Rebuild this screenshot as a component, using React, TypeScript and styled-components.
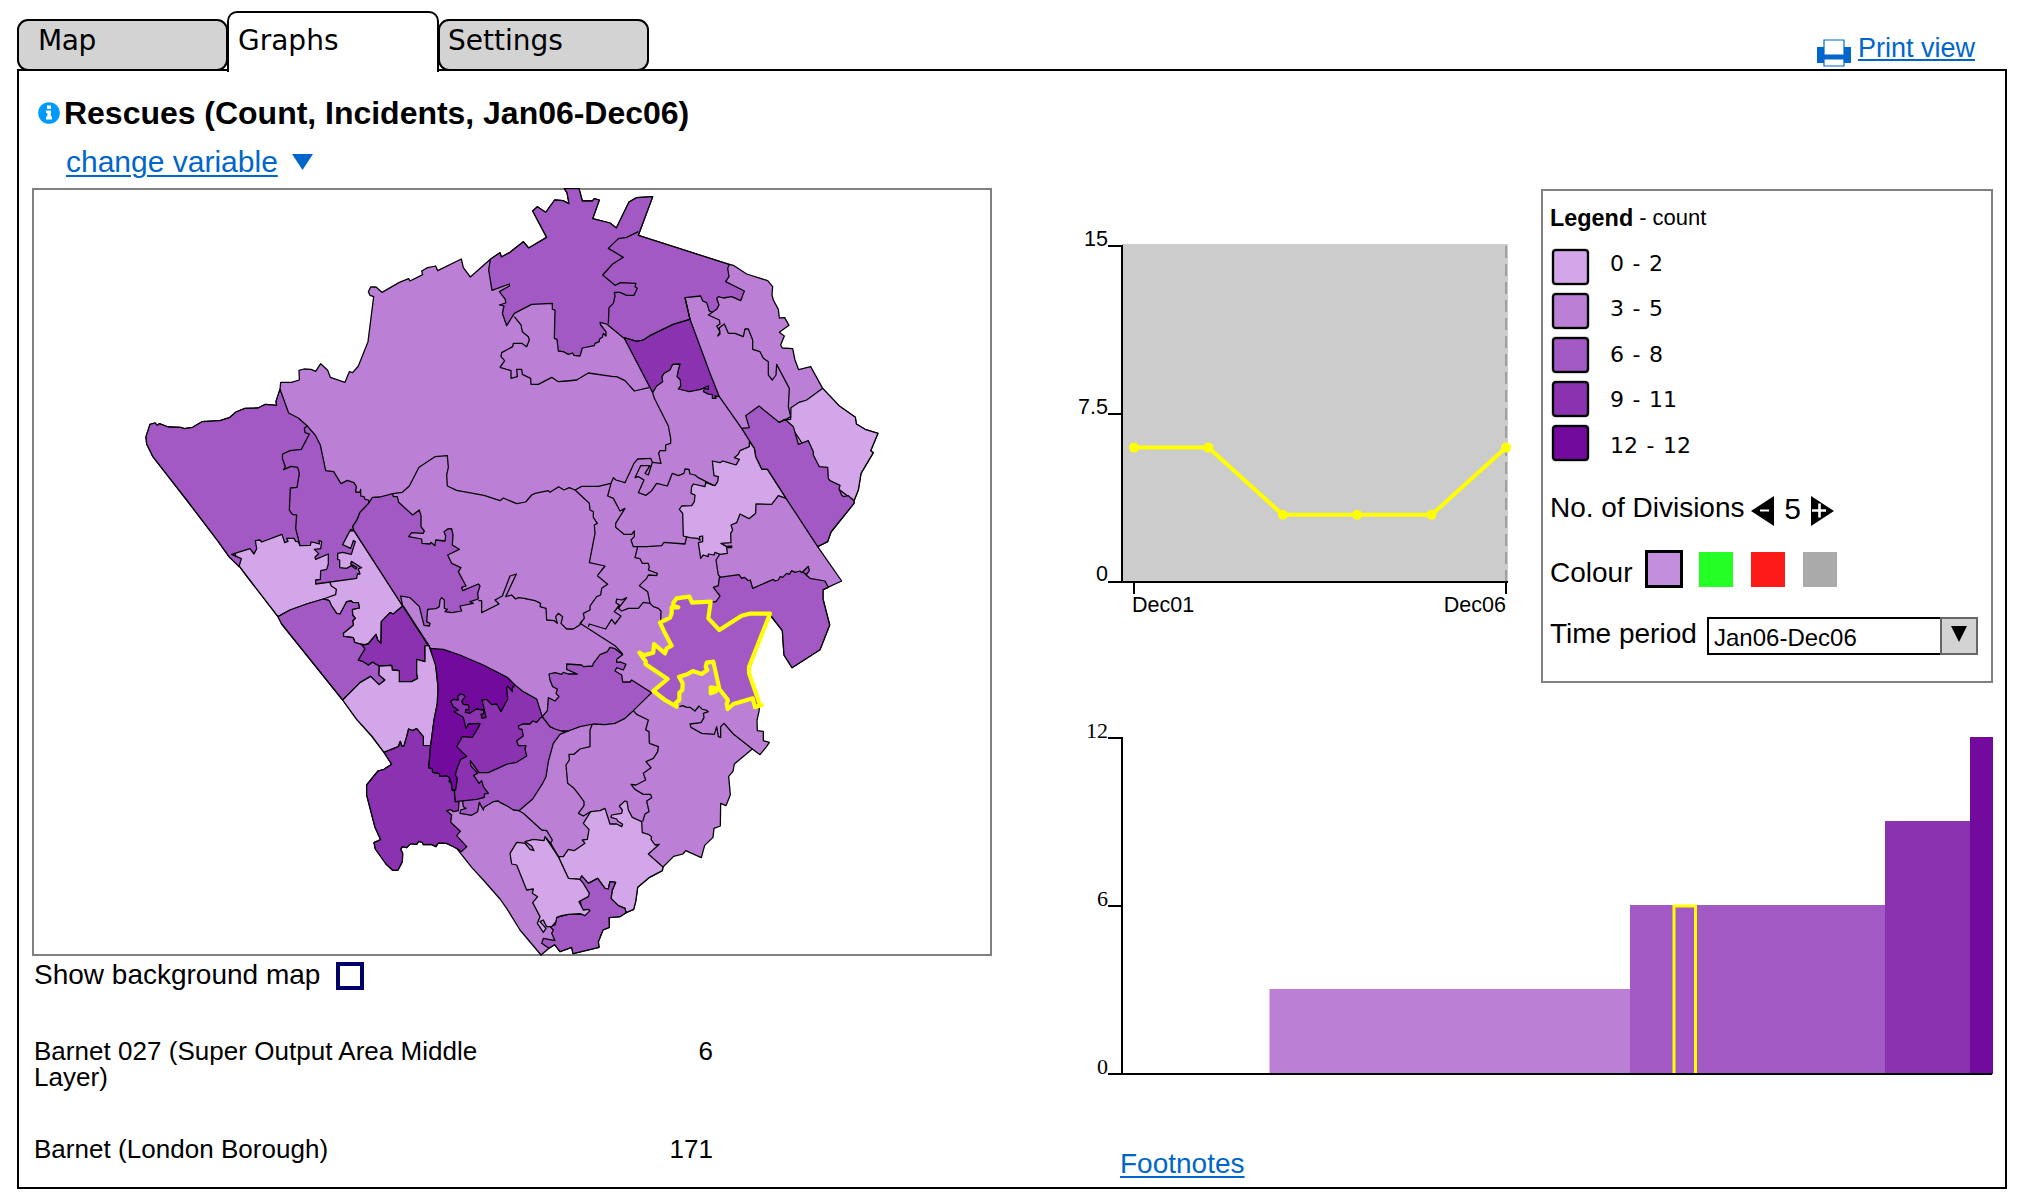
import React from "react";
import styled, { createGlobalStyle } from "styled-components";

const SANS = '"Liberation Sans", Arial, Helvetica, sans-serif';
const SERIF = '"Liberation Serif", "Times New Roman", serif';
const WIDE = '"DejaVu Sans", Verdana, sans-serif';
const LINK = "#0066cc";
const SHADES = ["#d3a6ea", "#bb80d6", "#a259c4", "#8a32b0", "#720b9d"];

const GlobalStyle = createGlobalStyle`
  *, *::before, *::after { box-sizing: border-box; }
  body { margin: 0; background: #fff; color: #000; font-family: ${SANS}; }
  svg { display: block; }
`;

const Page = styled.div`
  width: 2025px;
  height: 1202px;
  padding: 0 18px 13px 17px;
  display: flex;
  flex-direction: column;
  overflow: hidden;
`;

const Header = styled.header`
  height: 69px;
  flex: none;
  display: flex;
  justify-content: space-between;
  align-items: flex-end;
`;

const Tabs = styled.nav`
  display: flex;
  align-items: flex-end;
`;

const Tab = styled.button<{ $active?: boolean; $inset: number; $track: number }>`
  position: relative;
  z-index: ${(p) => (p.$active ? 2 : 0)};
  width: ${(p) => (p.$active ? 212 : 211)}px;
  height: ${(p) => (p.$active ? 61 : 52)}px;
  margin: 0 ${(p) => (p.$active ? "-1px" : "0")} ${(p) => (p.$active ? "-3px" : "-2px")}
    ${(p) => (p.$active ? "-1px" : "0")};
  padding: ${(p) => (p.$active ? 10 : 2)}px 0 0 ${(p) => p.$inset}px;
  border: 2px solid #000;
  border-bottom-width: ${(p) => (p.$active ? 0 : 2)}px;
  border-radius: ${(p) => (p.$active ? "10px 10px 0 0" : "11px")};
  background: ${(p) => (p.$active ? "#fff" : "#d3d3d3")};
  color: #000;
  font: 28px/36px ${WIDE};
  letter-spacing: ${(p) => p.$track}px;
  display: flex;
  align-items: flex-start;
`;

const PrintLink = styled.a`
  display: flex;
  align-items: flex-start;
  gap: 7px;
  margin: 0 32px 2px 0;
  color: ${LINK};
  font-size: 27px;
  line-height: 36px;
  svg { margin-top: 9px; }
  span { text-decoration: underline; text-decoration-thickness: 2px; text-underline-offset: 2px; }
`;

const Panel = styled.main`
  flex: 1;
  width: 1990px;
  border: 2px solid #000;
  padding: 22px 12px 0 13px;
  display: flex;
  flex-direction: column;
`;

const TitleRow = styled.div`
  display: flex;
  align-items: center;
  height: 40px;
  padding-left: 6px;
  gap: 4px;
`;

const Title = styled.h1`
  margin: 0;
  font-size: 32px;
  line-height: 40px;
  letter-spacing: -0.02px;
`;

const ChangeRow = styled.div`
  display: flex;
  align-items: center;
  gap: 14px;
  height: 36px;
  margin: 11px 0 8px 34px;
`;

const TextLink = styled.a<{ $size: number; $track?: number }>`
  color: ${LINK};
  font-size: ${(p) => p.$size}px;
  line-height: 36px;
  letter-spacing: ${(p) => p.$track ?? 0}px;
  text-decoration: underline;
  text-decoration-thickness: 2px;
  text-underline-offset: 3px;
`;

const Columns = styled.div`
  display: grid;
  grid-template-columns: 960px 933px;
  column-gap: 68px;
`;

const MapFrame = styled.div`
  width: 960px;
  height: 768px;
  border: 2px solid #808080;
  svg { margin: -2px; }
`;

const BackgroundRow = styled.label`
  display: flex;
  align-items: center;
  gap: 16px;
  height: 40px;
  padding-left: 2px;
  font-size: 28px;
  span { padding-bottom: 2px; }
`;

const CheckBox = styled.i`
  width: 28px;
  height: 28px;
  border: 4px solid #000066;
`;

const Stats = styled.dl`
  margin: 42px 0 0 2px;
  width: 679px;
  display: grid;
  grid-template-columns: 480px 1fr;
  row-gap: 46px;
  font-size: 26px;
  line-height: 26px;
  letter-spacing: 0.03px;
  dt, dd { margin: 0; }
  dd { text-align: right; }
`;

const TopRow = styled.div`
  display: flex;
  height: 512px;
`;

const LegendBox = styled.section`
  width: 452px;
  height: 494px;
  margin-top: 1px;
  padding: 10px 8px 0 7px;
  border: 2px solid #808080;
  display: flex;
  flex-direction: column;
`;

const LegendTitle = styled.div`
  display: flex;
  gap: 6px;
  height: 34px;
  font-size: 22px;
  line-height: 34px;
  b { font-size: 23.4px; }
`;

const LegendBody = styled.div`
  display: flex;
  gap: 21px;
  margin-top: 14px;
  padding-left: 2px;
`;

const SwatchList = styled.div`
  display: flex;
  flex-direction: column;
  gap: 8px;
`;

const Swatch = styled.i<{ $fill: string }>`
  width: 37px;
  height: 36px;
  border: 2px solid #000;
  border-radius: 4px;
  background: ${(p) => p.$fill};
  box-shadow: 0 0 0 0.5px rgba(0, 0, 0, 0.35), inset 0 0 0 0.5px rgba(0, 0, 0, 0.35);
`;

const RangeList = styled.div`
  font: 22px/45.4px ${WIDE};
  word-spacing: 1.5px;
  margin-top: -8px;
`;

const DivisionsRow = styled.div`
  display: flex;
  align-items: center;
  height: 36px;
  margin-top: 22px;
  font-size: 28px;
  line-height: 36px;
  svg { margin-top: 5px; }
  strong { width: 37px; padding-top: 2px; text-align: center; font-size: 30px; font-weight: 400; }
`;

const DivisionsLabel = styled.span`
  width: 201px;
`;

const ColourRow = styled.div`
  display: flex;
  align-items: center;
  height: 38px;
  margin-top: 24px;
  font-size: 28px;
  gap: 18px;
  span { width: 78px; padding-top: 8px; }
`;

const Chip = styled.i<{ $fill: string; $on?: boolean }>`
  width: ${(p) => (p.$on ? 38 : 34)}px;
  height: ${(p) => (p.$on ? 38 : 35)}px;
  margin-left: ${(p) => (p.$on ? -1 : 0)}px;
  margin-right: ${(p) => (p.$on ? -2 : 0)}px;
  border: ${(p) => (p.$on ? "3px solid #000" : "none")};
  background: ${(p) => p.$fill};
`;

const PeriodRow = styled.div`
  display: flex;
  align-items: center;
  height: 38px;
  margin-top: 29px;
  font-size: 28px;
`;

const PeriodLabel = styled.span`
  width: 157px;
  padding-bottom: 4px;
`;

const Select = styled.div`
  display: flex;
  width: 271px;
  height: 38px;
  border: 2px solid #000;
  font-size: 24px;
  line-height: 37px;
  justify-content: space-between;
  span { padding-left: 5px; }
`;

const SelectButton = styled.div`
  width: 38px;
  height: 38px;
  margin: -2px;
  border: 2px solid #666;
  background: #d3d3d3;
  display: flex;
  justify-content: center;
  padding-top: 7px;
`;

const Footer = styled.footer`
  padding-left: 60px;
  margin-top: 56px;
`;

const sheet = (dx: number, dy: number) => (pts: string) =>
  pts.trim().split(/\s+/).map((pair) => {
    const [x, y] = pair.split(",").map(Number);
    return `${x + dx},${y + dy}`;
  }).join(" ");

const NW = sheet(0, 0);
const NE = sheet(990, 0);
const SW = sheet(0, 960);
const SE = sheet(1110, 960);

const WEST_COAST = "48,770 60,733 75,729 82,736 88,731 115,741 152,742 163,746 188,742 216,725 270,722 298,713 318,696 345,685 384,684 406,673 440,676 438,664 450,628";
const NORTH_TOP = "91,238 120,218 124,231 150,217 190,185 206,204 260,172 218,93 232,80 257,97 284,60 309,62 327,71 321,38 313,26 357,26 367,63 397,63 403,56 418,60 398,116 450,129 469,144 507,66 530,53 578,50 535,166 800,251";
const EAST_EDGE = "1088,625 1137,677 1186,712 1189,732 1215,748 1254,760 1232,812 1240,818 1203,880 1195,930 1182,962";
const SW_TAIL = "980,1045 972,1041 950,1030 925,1029 918,1040 904,1033 880,1034 877,1027 866,1024 860,1033 842,1031 830,1043 817,1040 812,1048 818,1060 817,1085 804,1110 788,1111 768,1092 736,1047 732,1028 752,1019 735,982 710,885 710,855 744,813 762,808 785,793 762,757";
const SOUTH_TIP = "378,1238 360,1250 327,1253 328,1282 309,1290 295,1325 297,1342 219,1361 215,1342 180,1355 164,1334 147,1345";

const OUTLINE = [
  NW(WEST_COAST),
  NW("452,607 484,607 508,600 507,571 522,567 543,568 557,574 572,551 593,571 601,592 645,607 658,575 668,578 685,558 714,485 731,350 720,346 715,335 722,321 738,321 756,337 808,307 836,296 840,303 878,284 875,273 893,263 917,258 923,272 994,237 1000,263 1021,291"),
  NE(NORTH_TOP),
  NE("820,256 860,282 923,302 938,320 936,345 940,360 955,388 958,414 974,413 987,436 958,457 973,468 962,495 967,504 998,506 1005,540 1016,569 1052,560"),
  NE(EAST_EDGE),
  NE("1182,970 1113,1056 1103,1085 1073,1100"),
  SE("1025,243 969,269 969,297 989,375 960,449 876,503 852,465 847,392 810,345 747,510 779,612 777,635 771,660 772,692 790,694 790,722 808,727 798,742 780,764 757,747 703,792 699,814 686,829 691,884 678,917 662,910 661,978 642,985 639,1012 614,1036 604,1073 557,1052 549,1062 521,1069 489,1101 487,1112 447,1133 413,1162 407,1205 401,1228"),
  SE(SOUTH_TIP),
  SE("123,1365 60,1290 20,1225"),
  SW("1110,1197 1060,1140 1025,1102"),
  SW(SW_TAIL),
  SW("725,708 680,658 638,600 455,372 444,350 350,228 329,200 297,170 265,125 170,0"),
  NW("68,829 50,792"),
].join(" ");

const SELECTED = SE("520,308 530,295 550,292 568,290 576,308 632,305 625,355 658,390 725,347 748,341 810,341 747,500 747,520 779,612 785,615 765,622 758,595 700,612 683,627 680,612 684,600 658,567 650,530 640,485 620,488 617,500 622,510 605,522 578,513 562,523 537,530 548,550 547,570 538,578 538,600 528,608 530,620 495,600 460,573 503,537 437,493 437,483 430,475 418,458 432,466 460,458 462,432 495,460 500,445 515,437 495,400 480,368 500,358 510,353 515,340 515,322 535,322 520,318");

const REGIONS: [number, string][] = [
  [0, [SW("444,350 480,330 530,312 580,297 595,300 600,312 605,318 620,340 630,342 640,325 650,305 664,303 668,307 685,308 688,324 667,328 668,345 676,355 668,362 670,375 640,400 641,409 670,413 674,427 690,432 705,434 715,430 738,403 743,420 753,430 754,365 780,338 790,342 818,318 672,92 600,100 450,80 300,120 329,200 350,228")].join(" ")],
  [2, [NW(WEST_COAST), NW("476,699 505,714 532,738 557,767 571,795 587,872 611,875 633,911 652,901 672,908 679,920 677,936 690,937 692,928 692,948 702,950 705,958 716,960 716,970 690,997 682,1018 668,1040"), SW("672,92 662,88 638,134 662,145 670,122 676,125 664,163 638,157 623,160 623,178 629,180 629,203 650,205 664,197 678,207 680,202 662,192 664,184 695,203 685,206 690,222 682,222 680,235 557,252 557,240 571,238 572,212 590,208 595,192 595,162 557,178 555,171 566,161 553,148 572,146 575,125 567,121 568,132 555,128 543,126 541,136 510,137 505,125 497,124 492,115 470,115 474,124 464,128 456,103 395,126 390,120 376,122 380,146 372,162 360,146 305,163 334,176 327,200 297,170 265,125 170,0"), NW("68,829 50,792")].join(" ")],
  [2, SW("444,350 480,330 530,312 580,297 598,302 605,318 620,340 630,342 650,305 664,303 668,307 685,308 688,324 667,328 668,345 676,355 668,362 670,375 640,400 641,409 670,413 674,427 690,432 705,440 705,447 685,480 700,485 715,495 727,486 748,498 747,525 765,540 747,554 722,529 690,548 638,600 455,372")],
  [3, SW("818,318 790,342 780,338 754,365 753,430 743,420 738,403 715,432 697,436 705,447 685,480 700,485 715,495 727,486 748,498 785,496 787,510 808,512 808,545 845,545 863,535 860,520 860,478 885,485 885,440 897,440")],
  [0, SW("748,498 785,496 787,510 808,512 808,545 845,545 863,535 860,520 860,478 885,485 885,437 897,437 916,490 924,560 922,610 912,660 902,737 880,736 880,710 860,686 848,692 836,687 830,710 822,738 815,738 811,724 805,740 762,757 725,708 680,658 638,600 690,548 722,529 747,554 765,540 747,525")],
  [3, [SW("762,757 805,740 811,724 815,738 822,738 830,710 836,687 848,692 860,686 880,710 880,736 902,737 896,803 907,806 908,817 927,820 930,829 949,827 960,832 957,845 964,848 966,870 973,872 976,905 987,905 985,932 970,935 963,929 950,932 965,945 962,967 991,994 980,1007 1010,1040 994,1055"), SW(SW_TAIL)].join(" ")],
  [2, [SE("127,650 150,680 185,693 205,693 180,703 160,730 145,785 138,830 128,850 98,897 57,932 40,930 25,920 0,907"), SW("1105,903 1090,905 1062,922 1060,930 1048,907 1043,935 1025,946 990,940 992,930 1008,925 1000,920 998,905 1000,800 1100,700")].join(" ")],
  [3, [SW("1155,555 1180,575"), SE("110,597 127,650 120,655 110,667 98,663 90,672 68,672 55,678 57,686 66,688 70,708 50,722 55,737 78,737 75,747 80,768 50,787 22,792"), SW("1110,802 1075,818 1047,818 1021,782 1022,797 1043,820 1031,826 1047,850 1055,842 1060,860 1075,880 1063,882 1063,892 1040,898 976,905 973,872 962,820 940,700 960,560 1100,560")].join(" ")],
  [4, SW("900,445 940,448 990,465 1060,495 1132,532 1155,555 1147,564 1147,575 1133,558 1130,565 1133,597 1113,635 1100,612 1085,614 1070,598 1056,600 1062,625 1068,652 1056,655 1053,643 1062,640 1060,630 1038,627 1020,640 1006,637 1008,628 1016,630 1016,615 1000,613 995,604 1005,590 1000,584 990,582 983,590 985,600 970,598 962,604 970,620 985,630 972,635 1000,652 1008,685 1015,672 1050,670 1048,677 1027,712 997,710 980,740 1010,769 992,778 983,800 976,825 982,835 977,870 966,870 964,848 957,832 949,827 930,829 927,820 908,817 907,806 896,803 902,737 912,660 922,610 924,560 918,500")],
  [2, [NW("716,970 727,952 750,951 788,941 790,950 802,950 806,967 848,1005 868,990 873,1007 873,1040 883,1053 880,1060 845,1058 836,1070 875,1077 876,1090 900,1092 903,1087 915,1097 917,1080 945,1083 947,1068 942,1055 953,1047 965,1046 969,1065 967,1095 988,1108 953,1125 965,1150 993,1163 985,1175"), SW("1008,258 995,262 998,272 1045,252 1050,258 1043,280 1045,297 1020,305 1030,310 990,318 995,333 965,338 945,335 952,328 943,325 943,300 935,293 930,300 928,320 918,326 893,328 890,365 900,370 898,378 882,376 868,320 840,293 812,288 818,318 672,92 668,80"), NW("682,1018 690,997")].join(" ")],
  [2, NE(NORTH_TOP + " 808,254 803,265 807,290 797,305 853,333 842,362 815,350 790,354 775,350 770,355 777,375 770,388 757,397 748,393 740,368 728,363 722,348 675,353 690,418 640,433 570,467 550,480 530,484 490,473 440,432 420,427 422,435 438,455 438,468 430,460 427,472 418,478 418,485 405,490 403,497 367,504 360,528 342,526 338,519 325,523 310,515 295,513 291,478 283,475 285,390 277,388 277,370 215,373 163,400 140,437 127,400 132,378 118,375 137,369 136,358 118,335 148,318 148,312 96,331 86,270")],
  [3, NE("492,473 530,484 550,480 570,467 640,433 690,418 750,580 778,650 765,648 768,655 757,655 757,643 747,643 730,635 733,625 745,628 745,618 722,628 688,635 655,627 662,618 661,600 651,590 655,570 660,552 638,553 630,570 612,580 606,590 608,605 590,618 578,638")],
  [0, NE(EAST_EDGE + " 1100,900 1000,750 970,720 992,718 993,683 1015,668 1040,660")],
  [2, NE("845,745 868,743 857,707 897,678 957,727 975,718 1000,740 1015,793 1045,782 1060,815 1060,825 1078,860 1103,862 1105,895 1110,902 1140,916 1137,927 1145,945 1150,950 1165,947 1182,962 1182,970 1113,1056 1103,1085 1073,1100 978,955 922,868 905,868 887,830 883,805 870,785")],
  [0, NE("868,785 868,800 840,812 835,823 823,833 838,838 828,855 805,848 788,843 780,848 757,843 762,887 775,890 773,905 765,917 737,908 735,920 700,912 695,920 693,940 705,945 703,965 695,977 665,978 658,988 668,1000 670,1068 690,1073 712,1075 720,1081 718,1070 728,1068 728,1085 715,1088 722,1135 730,1125 745,1130 745,1122 762,1125 765,1117 780,1123 802,1120 800,1103 815,1103 815,1098 800,1100 783,1090 813,1088 812,1060 818,1050 813,1035 830,1028 840,1002 867,1016 887,1000 888,972 935,973 955,947 978,955 922,868 905,868 887,830 883,805")],
  [2, SE("658,232 717,224 725,235 733,232 745,242 751,240 758,265 820,238 825,243 835,240 840,230 848,232 860,220 868,223 875,212 885,217 900,213 905,218 925,199 928,212 920,223 909,217 930,235 975,243 985,262 969,269 969,297 989,375 960,449 876,503 852,465 847,392 808,341 748,341 725,347 658,390 625,355 632,307 648,305 660,288 640,262 655,257")],
  [2, SELECTED],
  [2, SE("455,578 395,540 390,546 368,546 365,525 345,513 350,503 370,510 378,493 362,486 350,487 350,478 368,464 345,446 330,442 322,455 300,464 280,490 278,498 250,500 245,495 200,492 200,508 232,522 205,522 190,517 185,523 165,518 147,522 150,540 158,560 172,567 168,580 177,590 165,603 145,593 142,632 127,650 150,680 165,687 185,693 205,693 240,680 280,672 315,674 345,670 375,655 400,632")],
  [0, SE("272,935 300,932 315,925 330,972 350,972 365,980 368,973 353,963 350,957 333,952 335,945 365,940 367,930 358,918 375,903 381,905 385,930 397,952 425,965 427,998 445,1003 455,1010 453,1018 465,1035 478,1033 445,1062 489,1101 487,1112 447,1133 413,1162 407,1205 401,1228 378,1238 375,1225 355,1217 333,1195 337,1170 347,1147 330,1145 325,1167 315,1165 293,1135 265,1150 245,1130 240,1138 205,1135 175,1070 190,1070 205,1048 222,1052 255,1030 247,1020 262,1018 267,988 250,970")],
  [2, SE("240,1138 245,1127 265,1150 293,1135 315,1165 325,1167 330,1145 347,1147 337,1170 333,1195 355,1217 375,1225 " + SOUTH_TIP + " 125,1330 130,1315 165,1322 155,1300 160,1290 150,1280 165,1275 170,1252 205,1243 245,1243 240,1185")],
  [0, SE("135,1010 132,1022 100,1018 75,1025 95,1038 102,1052 90,1048 75,1030 60,1028 50,1027 30,1060 35,1092 50,1095 80,1170 100,1167 97,1180 113,1190 98,1208 120,1250 112,1270 130,1297 138,1285 120,1265 130,1260 140,1280 155,1280 168,1265 170,1252 185,1247 205,1243 240,1241 255,1247 270,1232 265,1228 250,1230 237,1205 265,1190 268,1180 250,1150 240,1138 205,1135 175,1070")],
];

const BOUNDARIES = [
  NW("532,738 523,745 525,758 538,762 514,808 480,812 458,822 457,835 466,860 461,869 483,859 503,862 508,880 501,922 481,924 478,990 487,1003 500,1005 497,1045 510,1097"),
  SW("600,248 604,258 619,268 617,284 580,297"),
  SW("820,318 897,437 900,445"),
  SW("1045,302 1055,302 1055,338 1107,312 1095,300 1117,288 1140,228 1159,222 1127,290 1145,285 1157,297 1165,293 1190,296"),
  SE("75,296 105,302 122,310 120,320 138,325 140,360 163,362 172,370 167,350 175,340 188,350 183,370 200,387 220,387 240,374 248,360"),
  NW("788,941 817,937 838,918 867,862 915,830 952,827 955,862 950,885 952,918 980,931 1062,946 1110,962 1120,954 1160,971 1187,966"),
  NE("197,966 215,945 225,940 265,932 270,937 296,920 312,930 328,923 345,930 365,919 415,919 453,910 460,893 468,900 495,908 522,850 533,837 572,835 577,847 565,885 555,880 570,857 542,857 525,893 535,890 552,900 535,938 558,946 575,932 590,910 622,918 637,880 655,887 672,880 675,867 687,868 690,882 705,885 715,893 760,916"),
  NE("577,847 603,850 596,820 600,812 617,812 617,795 632,790 632,775 625,738 583,655 578,638"),
  NE("535,155 500,172 475,176 445,205 490,232 458,252 428,285 465,316 482,308 528,310 525,320 532,325 522,346 500,346 480,337 463,337 465,348 460,370 447,383 445,432"),
  NE("163,410 183,435 187,455 205,470 208,480 200,500 185,490 160,490 158,500 125,518 123,530 134,542 120,562 153,572 153,595 172,590 170,568 185,568 187,583 212,595 213,613 235,613 275,592 295,605 320,603 350,600 385,579 460,590 470,590 495,602 523,633 567,623"),
  NE("675,353 690,418"),
  NE("778,650 845,745"),
  NE("757,397 745,405 778,420 780,432 770,438 780,455 773,468 780,462 778,443 793,432 805,460 825,460 850,470 855,447 865,447 878,480 878,508 900,515 910,535 925,545 925,585 937,600 948,585 950,553 988,625 985,680 992,710 975,720 957,727"),
  NE("345,930 388,970 390,990 400,995 400,1012 412,1030 403,1035 405,1060 388,1148 435,1158 412,1187"),
  SE("292,227 323,253 305,265 302,285 290,290 270,318 270,330 250,340 253,355 240,370 345,437 368,462"),
  NE("453,910 443,948 460,955 480,993 495,985 467,1030 467,1042 492,1063 515,1063 523,1053 523,1070 513,1080 520,1100 560,1100 605,1097 612,1087 675,1092 680,1070"),
  SE("413,140 405,173 420,176 427,190 445,190 448,202 445,210 472,220 470,227 445,225 440,235 418,257 443,275 450,310 430,307 415,325 385,325 365,333 355,325 380,293 365,300 350,297 348,308 358,315 343,335 363,348 345,372 335,358 317,387 268,372 265,380"),
  SE("450,310 460,320 475,325 483,333 482,365"),
  SE("660,162 648,180 655,225 662,232"),
  SE("277,672 270,690 270,740 240,747 222,763 207,763 208,780 198,795 203,850 222,865 230,875 252,905 252,917 235,940 250,948 272,935"),
  SE("400,632 410,643 445,660 437,690 447,695 448,730 475,740 473,755 460,775 438,785 453,803 430,820 437,840 408,855 393,853 405,868 430,883 452,883 455,893 440,903 447,935 435,942 428,965"),
  SE("57,932 70,940 125,990 140,992 157,1020 152,1030 135,1010"),
  SE("152,1030 175,1070"),
  SE("538,620 548,617 560,622 570,622 585,633 597,618 607,628 618,630 625,635 610,640 612,653 603,668 570,672 573,682 605,700 643,703 650,680 655,710 662,712 662,680 672,670 700,702 757,747"),
];

function BoroughMap() {
  return (
    <svg width="960" height="768" viewBox="-294 24 2880 2304">
      <g stroke="#000" strokeWidth="3.8" strokeLinejoin="round">
        <polygon points={OUTLINE} fill={SHADES[1]} />
        {REGIONS.map(([shade, points], i) => (
          <polygon key={i} points={points} fill={SHADES[shade]} />
        ))}
        {BOUNDARIES.map((points, i) => (
          <polyline key={i} points={points} fill="none" />
        ))}
      </g>
      <g stroke="#ff0" strokeWidth="12.5" strokeLinejoin="round">
        <polygon points={SELECTED} fill="none" />
        <polygon points={SE("632,562 650,565 648,574 632,580")} fill="#ff0" />
      </g>
    </svg>
  );
}

const SERIES = [6, 6, 3, 3, 3, 6];

function TimeChart() {
  const pts = SERIES.map((v, i) => [74 + i * 74.4, 394 - v * 22.4]);
  return (
    <svg width="481" height="440" fontFamily={SANS} fontSize="21.5">
      <rect x="62" y="56" width="386" height="338" fill="#ccc" />
      <line x1="446" y1="58" x2="446" y2="393" stroke="#a0a0a0" strokeWidth="2" strokeDasharray="12 6" />
      <path d="M48 58H62V394M48 226H62M48 394H448M74 394V406M446 394V406" fill="none" stroke="#000" strokeWidth="2" />
      <polyline points={pts.map((p) => p.join(",")).join(" ")} fill="none" stroke="#ff0" strokeWidth="4" />
      {pts.map(([x, y]) => <circle key={x} cx={x} cy={y} r="5" fill="#ff0" />)}
      <g textAnchor="end">
        <text x="48" y="57.5">15</text>
        <text x="48" y="225.5">7.5</text>
        <text x="48" y="393">0</text>
        <text x="446" y="423.5">Dec06</text>
      </g>
      <text x="72" y="423.5">Dec01</text>
    </svg>
  );
}

const BARS = [
  { x: 209.5, w: 360.5, value: 3, shade: 1 },
  { x: 570, w: 255, value: 6, shade: 2 },
  { x: 825, w: 85, value: 9, shade: 3 },
  { x: 910, w: 23, value: 12, shade: 4 },
];

function RankChart() {
  return (
    <svg width="933" height="390" fontFamily={SERIF} fontSize="22">
      {BARS.map((b) => (
        <rect key={b.x} x={b.x} y={373 - b.value * 28} width={b.w} height={b.value * 28 + 1} fill={SHADES[b.shade]} />
      ))}
      <path d="M614 373V206H635.5V373" fill="none" stroke="#ff0" strokeWidth="3" />
      <path d="M48 38H62V374M48 206H62M48 374H932" fill="none" stroke="#000" strokeWidth="2" />
      <g textAnchor="end">
        <text x="48" y="38">12</text>
        <text x="48" y="206">6</text>
        <text x="48" y="373.5">0</text>
      </g>
    </svg>
  );
}

export default function App() {
  return (
    <Page>
      <GlobalStyle />
      <Header>
        <Tabs>
          <Tab $inset={19} $track={-0.4}>Map</Tab>
          <Tab $active $inset={9} $track={0}>Graphs</Tab>
          <Tab $inset={8} $track={0}>Settings</Tab>
        </Tabs>
        <PrintLink>
          <svg width="34" height="28" viewBox="0 0 34 28">
            <path d="M0 8H34V24H0Z" fill={LINK} />
            <path d="M7 1H27V16H7ZM7 20H27V27H7Z" fill="#fff" stroke={LINK} strokeWidth="1.2" />
          </svg>
          <span>Print view</span>
        </PrintLink>
      </Header>
      <Panel>
        <TitleRow>
          <svg width="22" height="22" viewBox="0 0 22 22">
            <circle cx="11" cy="11" r="10.8" fill="#0099ff" />
            <path d="M9 3.5H13V7H9ZM8 8.5H13V14.5H14V17.5H8V14.5H9.3V11H8Z" fill="#fff" />
          </svg>
          <Title>Rescues (Count, Incidents, Jan06-Dec06)</Title>
        </TitleRow>
        <ChangeRow>
          <TextLink $size={30}>change variable</TextLink>
          <svg width="21" height="16"><path d="M0 0H21L10.5 16Z" fill={LINK} /></svg>
        </ChangeRow>
        <Columns>
          <div>
            <MapFrame><BoroughMap /></MapFrame>
            <BackgroundRow><span>Show background map</span><CheckBox /></BackgroundRow>
            <Stats>
              <dt>Barnet 027 (Super Output Area Middle Layer)</dt>
              <dd>6</dd>
              <dt>Barnet (London Borough)</dt>
              <dd>171</dd>
            </Stats>
          </div>
          <div>
            <TopRow>
              <TimeChart />
              <LegendBox>
                <LegendTitle><b>Legend</b><span>- count</span></LegendTitle>
                <LegendBody>
                  <SwatchList>{SHADES.map((c) => <Swatch key={c} $fill={c} />)}</SwatchList>
                  <RangeList>
                    <div>0 - 2</div><div>3 - 5</div><div>6 - 8</div><div>9 - 11</div><div>12 - 12</div>
                  </RangeList>
                </LegendBody>
                <DivisionsRow>
                  <DivisionsLabel>No. of Divisions</DivisionsLabel>
                  <svg width="23" height="30"><path d="M23 0V30L0 15Z" /><path d="M9 14.5H18" stroke="#fff" strokeWidth="2" /></svg>
                  <strong>5</strong>
                  <svg width="23" height="30"><path d="M0 0V30L23 15Z" /><path d="M1 14.5H15M8.5 7.5V21.5" stroke="#fff" strokeWidth="2.6" /></svg>
                </DivisionsRow>
                <ColourRow>
                  <span>Colour</span>
                  <Chip $fill="#c48ede" $on />
                  <Chip $fill="#24ff24" />
                  <Chip $fill="#ff1a1a" />
                  <Chip $fill="#aaaaaa" />
                </ColourRow>
                <PeriodRow>
                  <PeriodLabel>Time period</PeriodLabel>
                  <Select>
                    <span>Jan06-Dec06</span>
                    <SelectButton><svg width="16" height="16"><path d="M0 0H16L8 16Z" /></svg></SelectButton>
                  </Select>
                </PeriodRow>
              </LegendBox>
            </TopRow>
            <RankChart />
            <Footer><TextLink $size={28}>Footnotes</TextLink></Footer>
          </div>
        </Columns>
      </Panel>
    </Page>
  );
}
